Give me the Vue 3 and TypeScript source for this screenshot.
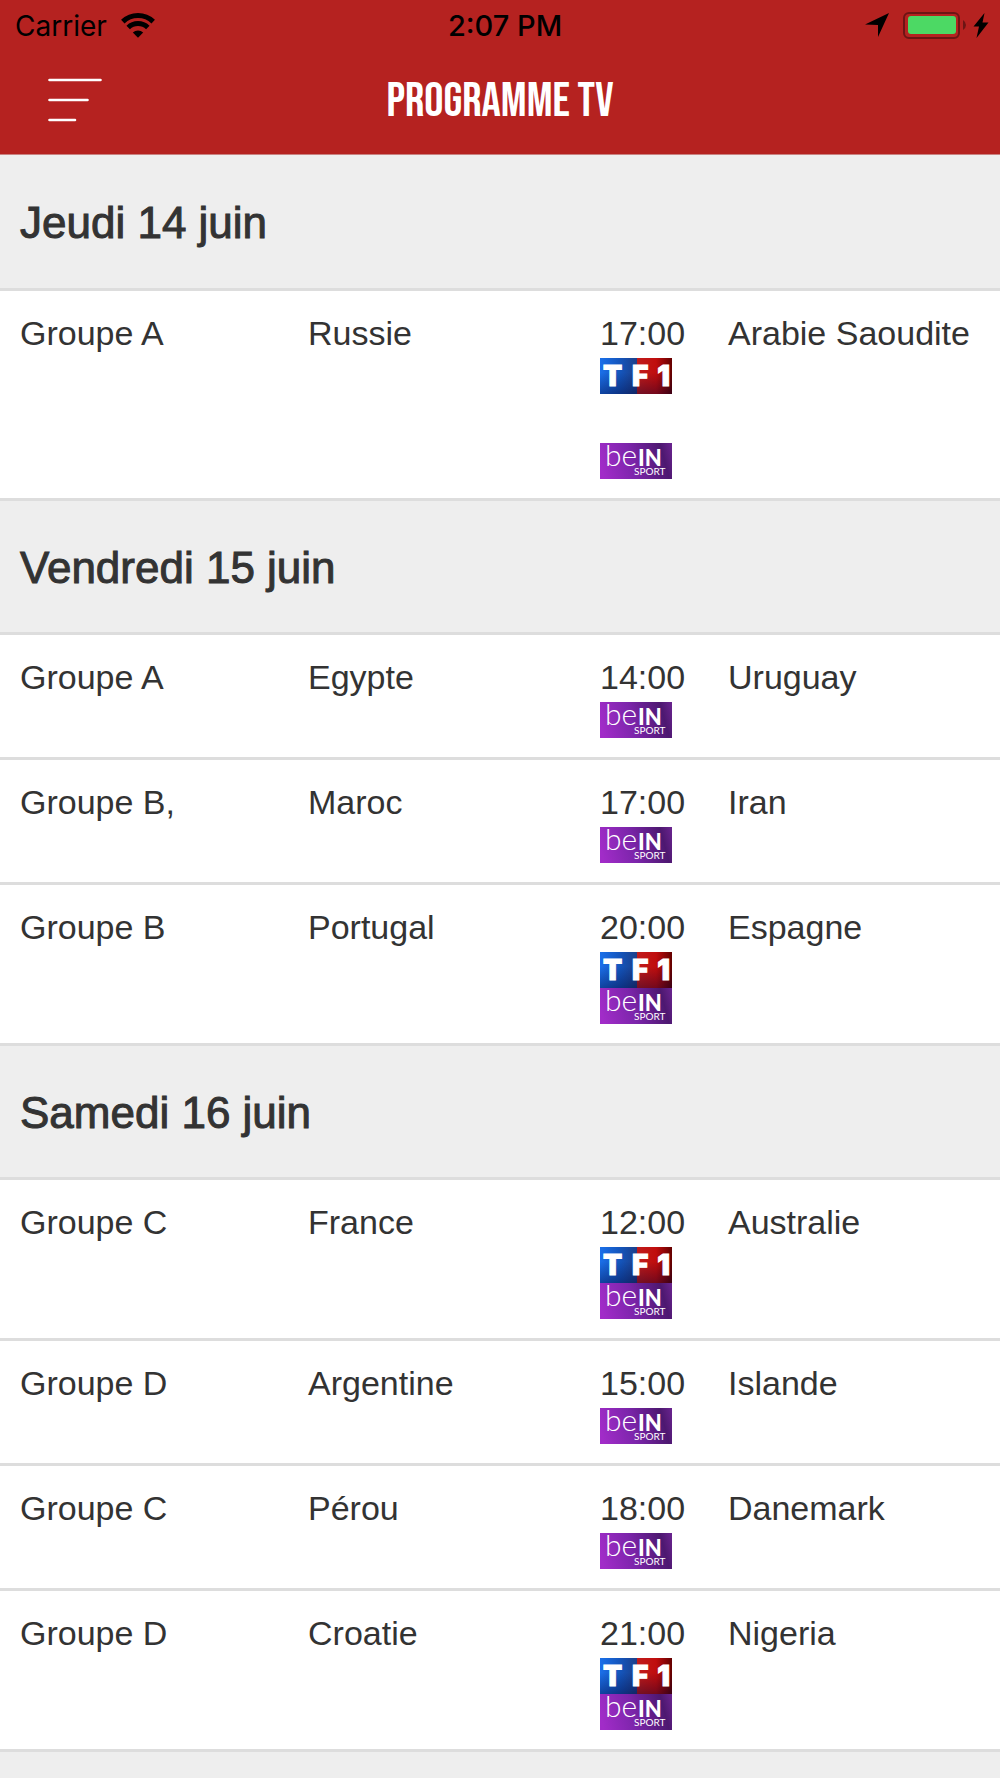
<script setup lang="ts">
type Channel = 'tf1' | 'bein'

interface Match {
  group: string
  home: string
  time: string
  away: string
  channels: Channel[]
  spaced?: boolean
}

interface Day {
  title: string
  matches: Match[]
}

const days: Day[] = [
  {
    title: 'Jeudi 14 juin',
    matches: [
      { group: 'Groupe A', home: 'Russie', time: '17:00', away: 'Arabie Saoudite', channels: ['tf1', 'bein'], spaced: true },
    ],
  },
  {
    title: 'Vendredi 15 juin',
    matches: [
      { group: 'Groupe A', home: 'Egypte', time: '14:00', away: 'Uruguay', channels: ['bein'] },
      { group: 'Groupe B,', home: 'Maroc', time: '17:00', away: 'Iran', channels: ['bein'] },
      { group: 'Groupe B', home: 'Portugal', time: '20:00', away: 'Espagne', channels: ['tf1', 'bein'] },
    ],
  },
  {
    title: 'Samedi 16 juin',
    matches: [
      { group: 'Groupe C', home: 'France', time: '12:00', away: 'Australie', channels: ['tf1', 'bein'] },
      { group: 'Groupe D', home: 'Argentine', time: '15:00', away: 'Islande', channels: ['bein'] },
      { group: 'Groupe C', home: 'Pérou', time: '18:00', away: 'Danemark', channels: ['bein'] },
      { group: 'Groupe D', home: 'Croatie', time: '21:00', away: 'Nigeria', channels: ['tf1', 'bein'] },
    ],
  },
]
</script>

<template>
  <div class="page">
    <header class="header">
      <div class="status">
        <div class="status-left">
          <span>Carrier</span>
          <svg class="wifi" width="36" height="26" viewBox="0 0 36 26" aria-hidden="true">
            <g fill="none" stroke="#000" stroke-width="5">
              <path d="M2.800 8.600A22 22 0 0 1 33.200 8.600" />
              <path d="M8.200 14.500A14.200 14.200 0 0 1 27.800 14.500" />
            </g>
            <path d="M12.800 19.600A7.500 7.500 0 0 1 23.200 19.600L18 24.800Z" />
          </svg>
        </div>
        <span class="clock">2:07 PM</span>
        <div class="status-right">
          <svg width="26" height="26" viewBox="0 0 26 26" aria-hidden="true">
            <path d="M25 0L14 24V12L1 11.500Z" />
          </svg>
          <svg class="battery" width="64" height="28" viewBox="0 0 64 28" aria-hidden="true">
            <rect x="1" y="1" width="55" height="25" rx="5" fill="none" stroke="#6d1514" stroke-width="2" />
            <rect x="5" y="4" width="48" height="18" rx="3" fill="#4cd964" />
            <path d="M60 8Q63 10 63 13T60 18Z" fill="#6d1514" />
          </svg>
          <svg width="16" height="26" viewBox="0 0 16 26" aria-hidden="true">
            <path d="M11.500 0L0.500 13.500H6L3.500 25L15.500 9.500H9.500Z" />
          </svg>
        </div>
      </div>
      <div class="nav">
        <button class="menu" type="button" aria-label="Menu">
          <svg width="54" height="44" viewBox="0 0 54 44" aria-hidden="true">
            <path d="M1.500 2H52.500M1.500 22H39.500M1.500 42H27" stroke="#fff" stroke-width="2.600" stroke-linecap="round" />
          </svg>
        </button>
        <h1 class="title">PROGRAMME TV</h1>
      </div>
    </header>

    <main class="main">
      <table class="schedule">
        <colgroup>
          <col class="col-group" />
          <col class="col-home" />
          <col class="col-time" />
          <col class="col-away" />
        </colgroup>
        <tbody v-for="day in days" :key="day.title">
          <tr class="day">
            <th colspan="4" scope="rowgroup">{{ day.title }}</th>
          </tr>
          <tr v-for="match in day.matches" :key="match.time" class="match">
            <td>{{ match.group }}</td>
            <td>{{ match.home }}</td>
            <td class="slot">
              <time>{{ match.time }}</time>
              <div class="channels" :class="{ spaced: match.spaced }">
                <template v-for="channel in match.channels" :key="channel">
                  <svg v-if="channel === 'tf1'" class="logo tf1" viewBox="0 0 72 36" role="img" aria-label="TF1">
                    <text y="28"><tspan x="3">T</tspan><tspan x="32">F</tspan><tspan x="70" text-anchor="end">1</tspan></text>
                  </svg>
                  <svg v-else class="logo bein" viewBox="0 0 72 36" role="img" aria-label="beIN Sport">
                    <text class="be" x="5" y="23">be<tspan class="in" x="38">IN</tspan><tspan class="sport" x="34" y="32">SPORT</tspan></text>
                  </svg>
                </template>
              </div>
            </td>
            <td>{{ match.away }}</td>
          </tr>
        </tbody>
      </table>
    </main>
  </div>
</template>

<style>
body {
  margin: 0;
  background: #eee;
}
</style>

<style scoped>
.page {
  display: flex;
  flex-direction: column;
  min-height: 100vh;
  color: #333;
  font-family: "Liberation Sans", Arial, sans-serif;
  background: #eee;
}

.header {
  background: #b52220;
  border-bottom: 1px solid #c98281;
}

.status {
  display: grid;
  grid-template-columns: 1fr auto 1fr;
  align-items: center;
  height: 50px;
  padding: 0 11px 0 15px;
  color: #000;
  font: 28px/52px Inter, sans-serif;
}

.status-left,
.status-right {
  display: flex;
  align-items: center;
}

.status-left {
  gap: 13px;
}

.status-right {
  justify-content: flex-end;
  gap: 6px;
}

.battery {
  margin-left: 7px;
}

.clock {
  font-size: 29px;
  font-weight: 500;
  padding-left: 6px;
}

.nav {
  display: grid;
  grid-template-columns: 1fr auto 1fr;
  align-items: center;
  height: 104px;
  padding: 0 48px 4px;
  box-sizing: border-box;
}

.menu {
  justify-self: start;
  display: flex;
  padding: 0;
  border: 0;
  background: none;
  cursor: pointer;
}

.title {
  margin: 0;
  padding-top: 4px;
  color: #fff;
  font: 400 48px/50px "Bebas Neue", "Liberation Sans Narrow", sans-serif;
}

.main {
  flex: 1;
}

.schedule {
  width: 100%;
  table-layout: fixed;
  border-spacing: 0;
  border-bottom: 3px solid #ddd;
}

.col-group {
  width: 28.8%;
}

.col-home {
  width: 29.2%;
}

.col-time {
  width: 12.8%;
}

.col-away {
  width: 29.2%;
}

.day th {
  box-sizing: content-box;
  height: 129px;
  padding: 2px 20px 0;
  border-top: 3px solid #ddd;
  background: #eee;
  font-size: 44px;
  font-weight: 400;
  line-height: 61px;
  text-align: left;
  -webkit-text-stroke: 1px #333;
}

tbody:first-of-type .day th {
  height: 131px;
  border-top: 0;
}

.match td {
  padding: 18px 0 19px 20px;
  border-top: 3px solid #ddd;
  background: #fff;
  font-size: 34px;
  line-height: 49px;
  vertical-align: top;
}

.slot time {
  display: block;
}

.channels {
  display: flex;
  flex-direction: column;
}

.spaced {
  gap: 49px;
}

.logo {
  display: block;
  width: 72px;
  height: 36px;
  fill: #fff;
  overflow: visible;
}

.tf1 {
  background:
    linear-gradient(transparent 40%, rgba(0, 0, 50, 0.4)),
    linear-gradient(90deg, #1a70ea 0, #1453b8 30%, #1d3f88 52%, transparent 52%),
    linear-gradient(90deg, #c01c1c 52%, #c00d0d 78%, #640000);
  font: 900 28px Inter, sans-serif;
  stroke: #fff;
  stroke-width: 1px;
}

.bein {
  background: linear-gradient(75deg, #a12cc8 5%, #7c25ab 45%, #4d1870 85%, #6b2490);
}

.be {
  font: 300 30px Lato, sans-serif;
}

.in {
  font: 900 22px Lato, sans-serif;
}

.sport {
  font: 400 10px Lato, sans-serif;
}
</style>
